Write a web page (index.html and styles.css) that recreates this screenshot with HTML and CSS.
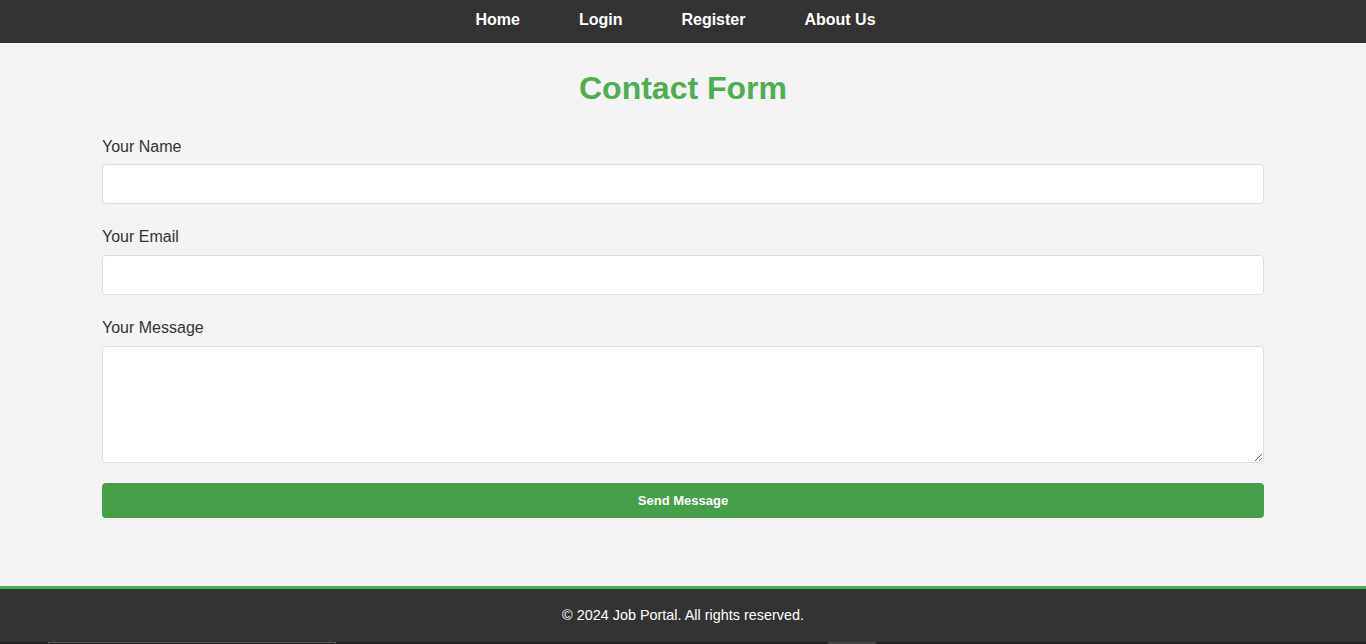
FILE: index.html
```html
<!DOCTYPE html>
<html lang="en">
<head>
<meta charset="utf-8">
<title>Contact Form</title>
<link rel="stylesheet" href="styles.css">
</head>
<body>
<nav class="navbar">
  <a href="#" class="nav-link">Home</a>
  <a href="#" class="nav-link">Login</a>
  <a href="#" class="nav-link">Register</a>
  <a href="#" class="nav-link">About Us</a>
</nav>
<main class="content">
  <h1 class="title">Contact Form</h1>
  <form class="contact-form">
    <label class="field-label" for="name">Your Name</label>
    <input class="field-input" id="name" type="text">
    <label class="field-label" for="email">Your Email</label>
    <input class="field-input" id="email" type="email">
    <label class="field-label" for="message">Your Message</label>
    <textarea class="field-textarea" id="message"></textarea>
    <button class="submit-btn" type="button">Send Message</button>
  </form>
</main>
<footer class="footer">
  <p class="footer-text">© 2024 Job Portal. All rights reserved.</p>
</footer>
<div class="below">
  <div class="below-box one"></div>
  <div class="below-box two"></div>
</div>
</body>
</html>
```

FILE: styles.css
```css
* { box-sizing: border-box; }
html, body { margin: 0; padding: 0; }
body {
  font-family: "Liberation Sans", Arial, sans-serif;
  background: #f4f4f4;
  color: #333;
}
.navbar {
  height: 43px;
  background: #333;
  display: flex;
  justify-content: center;
  align-items: center;
  gap: 59px;
  padding-right: 15px;
  padding-bottom: 4px;
}
.nav-link {
  color: #fff;
  text-decoration: none;
  font-weight: bold;
  font-size: 16px;
}
.content {
  width: 1162px;
  margin: 0 auto;
  padding: 27px 0 68px;
}
.title {
  margin: 0 0 31px;
  text-align: center;
  color: #4caf50;
  font-size: 32px;
  line-height: 37px;
}
.contact-form {
  display: flex;
  flex-direction: column;
}
.field-label {
  font-size: 16px;
  line-height: 18px;
  margin-bottom: 8px;
}
.field-input,
.field-textarea {
  width: 100%;
  height: 40px;
  border: 1px solid #ddd;
  border-radius: 4px;
  background: #fff;
  margin-bottom: 24px;
  font-family: inherit;
  font-size: 14px;
  padding: 10px;
}
.field-textarea {
  height: 117px;
  margin-bottom: 20px;
  resize: vertical;
}
.field-input + .field-label { margin-bottom: 9px; }
.submit-btn {
  height: 35px;
  border: none;
  border-radius: 4px;
  background: #45a049;
  color: #fff;
  font-family: inherit;
  font-weight: bold;
  font-size: 13px;
}
.footer {
  background: #333;
  border-top: 3px solid #4caf50;
  height: 56px;
  padding-top: 18px;
  text-align: center;
}
.footer-text {
  margin: 0;
  color: #fff;
  font-size: 14.4px;
  line-height: 16px;
}
.below {
  height: 20px;
  background: #222;
  position: relative;
}
.below-box { position: absolute; top: 0; height: 20px; }
.below-box.one { left: 48px; width: 288px; border: 1px solid #555; background: #2b2b2b; }
.below-box.two { left: 828px; width: 48px; background: #444; }
```
